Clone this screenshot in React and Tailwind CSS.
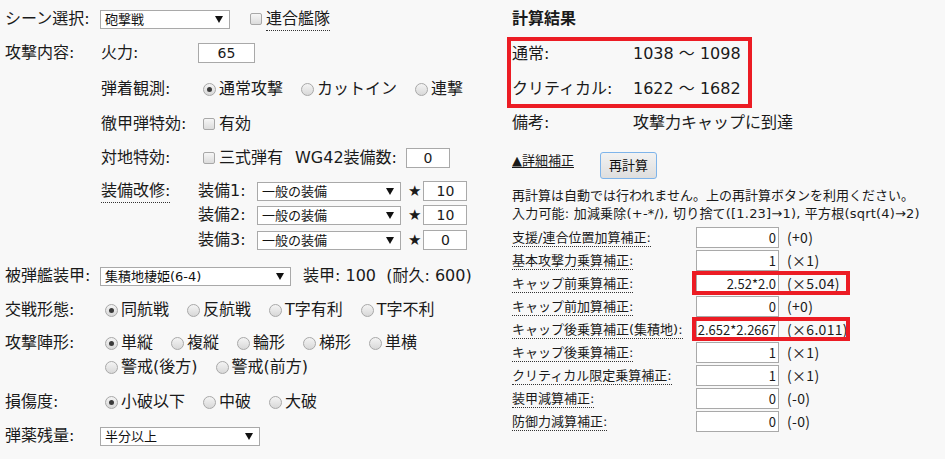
import React from 'react';

const FONT = { fontFamily: '"DejaVu Sans", "Noto Sans CJK JP", sans-serif' };
const NOTO = { fontFamily: '"Noto Sans CJK JP", "Noto Sans", sans-serif' };

const Radio = ({ checked, label, last }) => (
  <span className={`flex items-center ${last ? '' : 'mr-[13px]'}`}>
    <span className="ml-[5px] mr-[3px] w-[13px] h-[13px] rounded-full border border-[#a8a8a8] bg-gradient-to-b from-[#f4f4f4] to-[#d8d8d8] flex items-center justify-center">
      {checked && <span className="w-[5px] h-[5px] rounded-full bg-[#3a3a3a]" />}
    </span>
    <span>{label}</span>
  </span>
);

const Check = ({ className = '' }) => (
  <span className={`w-[12px] h-[12px] rounded-[2px] border border-[#a8a8a8] bg-gradient-to-b from-[#f6f6f6] to-[#dcdcdc] ${className}`} />
);

const Select = ({ value, w }) => (
  <div className={`${w} h-[19px] bg-white border border-[#a9a9a9] flex items-center justify-between pl-[4px] pr-[6px] text-[13px] leading-[17px] text-[#111]`}>
    <span className="whitespace-nowrap">{value}</span>
    <svg width="8" height="7" viewBox="0 0 8 7" className="shrink-0">
      <polygon points="0,0 8,0 4,7" fill="#111" />
    </svg>
  </div>
);

const NumBox = ({ value, w }) => (
  <div className={`${w} h-[20px] bg-white border border-[#a9a9a9] flex items-center justify-center text-[14px] leading-[18px]`}>
    {value}
  </div>
);

const Row = ({ label, children, className = '' }) => (
  <div className={`flex items-center h-[24px] ${className}`}>
    <div className="w-[95px] shrink-0">{label}</div>
    <div className="flex items-center">{children}</div>
  </div>
);

const SubRow = ({ label, children, className = '' }) => (
  <div className={`flex items-center h-[24px] ${className}`}>
    <div className="w-[97px] shrink-0">{label}</div>
    <div className="flex items-center">{children}</div>
  </div>
);

const modifiers = [
  { label: '支援/連合位置加算補正:', value: '0', note: '(+0)' },
  { label: '基本攻撃力乗算補正:', value: '1', note: '(×1)' },
  { label: 'キャップ前乗算補正:', value: '2.52*2.0', note: '(×5.04)', mark: true },
  { label: 'キャップ前加算補正:', value: '0', note: '(+0)' },
  { label: 'キャップ後乗算補正(集積地):', value: '2.652*2.2667', note: '(×6.011)', mark: true },
  { label: 'キャップ後乗算補正:', value: '1', note: '(×1)' },
  { label: 'クリティカル限定乗算補正:', value: '1', note: '(×1)' },
  { label: '装甲減算補正:', value: '0', note: '(-0)' },
  { label: '防御力減算補正:', value: '0', note: '(-0)' },
];

export default function App() {
  return (
    <div className="w-[945px] h-[459px] bg-[#f8f8f8] text-[#1a1a1a] text-[16px] flex overflow-hidden" style={FONT}>
      {/* left: inputs */}
      <div className="w-[512px] shrink-0 pl-[5px]">
        <Row label="シーン選択:" className="mt-[7px]">
          <Select value="砲撃戦" w="w-[130px]" />
          <Check className="ml-[20px] mr-[4px]" />
          <span className="leading-[22px] border-b border-dotted border-[#333]">連合艦隊</span>
        </Row>

        <div className="flex mt-[10px]">
          <div className="w-[96px] shrink-0 h-[24px] flex items-center">攻撃内容:</div>
          <div>
            <SubRow label="火力:">
              <div className="w-[57px] h-[20px] bg-white border border-[#a9a9a9] flex items-center justify-center text-[14px]">65</div>
            </SubRow>
            <SubRow label="弾着観測:" className="mt-[12px]">
              <Radio checked label="通常攻撃" />
              <Radio label="カットイン" />
              <Radio label="連撃" last />
            </SubRow>
            <SubRow label="徹甲弾特効:" className="mt-[11px]">
              <Check className="ml-[5px] mr-[4px]" />
              <span>有効</span>
            </SubRow>
            <SubRow label="対地特効:" className="mt-[10px]">
              <Check className="ml-[5px] mr-[4px]" />
              <span>三式弾有</span>
              <span className="ml-[12px]">WG42装備数:</span>
              <NumBox value="0" w="w-[44px] ml-[9px]" />
            </SubRow>
            <div className="flex mt-[9px]">
              <div className="w-[97px] shrink-0 h-[24px] flex items-center">
                <span className="leading-[22px] border-b border-dotted border-[#333]">装備改修:</span>
              </div>
              <div>
                {[
                  ['装備1:', '10'],
                  ['装備2:', '10'],
                  ['装備3:', '0'],
                ].map(([l, v], i) => (
                  <div key={l} className={`flex items-center h-[24px] ${i === 2 ? 'mt-[1px]' : ''}`}>
                    <span className="w-[59px] whitespace-nowrap">{l}</span>
                    <Select value="一般の装備" w="w-[144px]" />
                    <span className="ml-[7px] mr-[2px] text-[15px]">★</span>
                    <NumBox value={v} w="w-[44px]" />
                  </div>
                ))}
              </div>
            </div>
          </div>
        </div>

        <Row label="被弾艦装甲:" className="mt-[12px]">
          <Select value="集積地棲姫(6-4)" w="w-[191px]" />
          <span className="ml-[12px] whitespace-pre">装甲: 100  (耐久: 600)</span>
        </Row>

        <Row label="交戦形態:" className="mt-[10px]">
          <Radio checked label="同航戦" />
          <Radio label="反航戦" />
          <Radio label="T字有利" />
          <Radio label="T字不利" last />
        </Row>

        <Row label="攻撃陣形:" className="mt-[9px]">
          <Radio checked label="単縦" />
          <Radio label="複縦" />
          <Radio label="輪形" />
          <Radio label="梯形" />
          <Radio label="単横" last />
        </Row>
        <Row label="">
          <Radio label="警戒(後方)" />
          <Radio label="警戒(前方)" last />
        </Row>

        <Row label="損傷度:" className="mt-[11px]">
          <Radio checked label="小破以下" />
          <Radio label="中破" />
          <Radio label="大破" last />
        </Row>

        <Row label="弾薬残量:" className="mt-[10px]">
          <Select value="半分以上" w="w-[160px]" />
        </Row>
      </div>

      {/* right: results */}
      <div className="flex-1">
        <div className="h-[24px] mt-[7px] flex items-center font-bold">計算結果</div>

        <div className="relative mt-[11px]">
          <div className="flex items-center h-[24px]">
            <span className="w-[121px]">通常:</span>
            <span>1038 〜 1098</span>
          </div>
          <div className="flex items-center h-[24px] mt-[11px]">
            <span className="w-[121px]">クリティカル:</span>
            <span>1622 〜 1682</span>
          </div>
          <div className="absolute left-[-5px] top-[-5px] w-[245px] h-[71px] border-4 border-[#ec1c24]" />
        </div>

        <div className="flex items-center h-[24px] mt-[10px]">
          <span className="w-[121px]">備考:</span>
          <span>攻撃力キャップに到達</span>
        </div>

        <div className="flex items-start mt-[17px] h-[27px]">
          <span className="mt-[1px] text-[13px] leading-[16px] underline underline-offset-2">▲詳細補正</span>
          <button className="ml-[26px] w-[57px] h-[27px] rounded-[3px] border border-[#7eb4ea] bg-gradient-to-b from-[#f2f2f2] to-[#dedede] text-[13px] leading-none text-[#111]">
            再計算
          </button>
        </div>

        <div className="mt-[8px] text-[13px] leading-[18px] whitespace-nowrap">
          <div>再計算は自動では行われません。上の再計算ボタンを利用ください。</div>
          <div className="tracking-[0.2px]">入力可能: 加減乗除(+-*/), 切り捨て([1.23]→1), 平方根(sqrt(4)→2)</div>
        </div>

        <div className="mt-[3px] text-[13px]">
          {modifiers.map((m) => (
            <div key={m.label} className="flex items-center h-[23px]">
              <div className="w-[184px] shrink-0 flex">
                <span className="leading-[17px] border-b border-dotted border-[#333] whitespace-nowrap">{m.label}</span>
              </div>
              <div className="relative flex items-center" style={NOTO}>
                <div className="w-[83px] h-[21px] bg-white border border-[#a9a9a9] flex items-center justify-end pr-[2px] text-[13px] leading-[17px] overflow-hidden whitespace-nowrap">
                  {m.value}
                </div>
                <span className="ml-[8px] text-[14px] tracking-[0.3px]">{m.note}</span>
                {m.mark && (
                  <div className="absolute left-[-4px] top-[-2px] w-[158px] h-[24px] border-4 border-[#ec1c24]" />
                )}
              </div>
            </div>
          ))}
        </div>
      </div>
    </div>
  );
}
